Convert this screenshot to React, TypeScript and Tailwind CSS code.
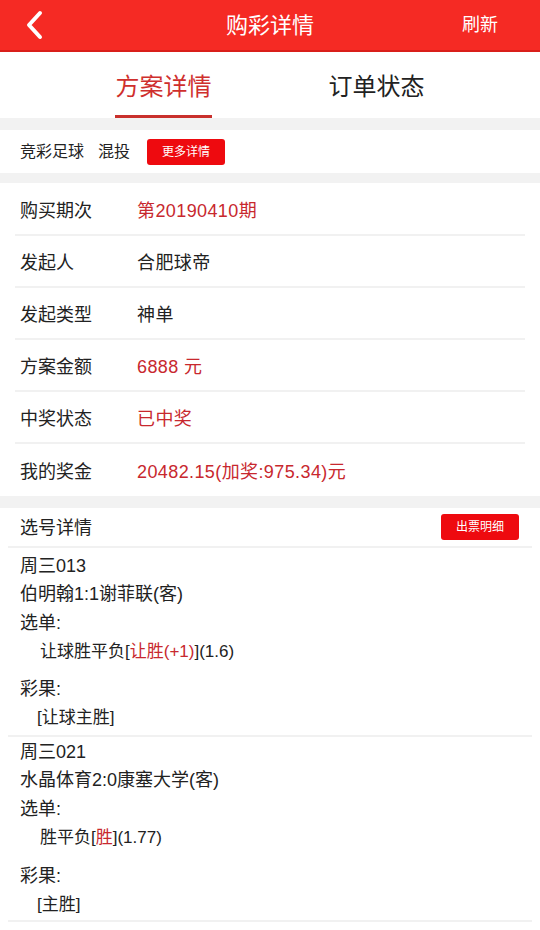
import React from "react";

const font = { fontFamily: '"Liberation Sans", "Noto Sans CJK SC", sans-serif' };

function InfoRow({ label, value, red, last }: { label: string; value: string; red?: boolean; last?: boolean }) {
  return (
    <div className={`mx-[15px] flex h-[52px] items-center pt-[4px] ${last ? "" : "border-b-2 border-[#f1f1f1]"}`}>
      <div className="w-[122px] pl-[5px] text-[18px] text-[#222]">{label}</div>
      <div className={`text-[18px] tracking-[0.4px] ${red ? "text-[#c8282e]" : "text-[#222]"}`}>{value}</div>
    </div>
  );
}

function Line({ children, cls = "" }: { children: React.ReactNode; cls?: string }) {
  return <div className={`flex h-[28.5px] items-center text-[18px] text-[#222] ${cls}`}>{children}</div>;
}

function Sub({ children, cls = "" }: { children: React.ReactNode; cls?: string }) {
  return <div className={`flex h-[28.5px] items-center text-[17px] text-[#222] ${cls}`}>{children}</div>;
}

export default function App() {
  return (
    <div className="w-[540px] min-h-[930px] bg-white" style={font}>
      {/* Header */}
      <div className="flex h-[52px] items-center border-b-2 border-[#d91f1a] bg-[#f52a24] px-[24px]">
        <div className="flex w-[80px] items-center">
          <svg width="22" height="30" viewBox="0 0 22 30">
            <path d="M16 3 L5 15 L16 27" fill="none" stroke="#fff" strokeWidth="4" strokeLinecap="round" strokeLinejoin="round" />
          </svg>
        </div>
        <div className="flex-1 text-center text-[22px] text-white">购彩详情</div>
        <div className="flex w-[80px] justify-end pr-[18px] text-[18px] text-white">刷新</div>
      </div>

      {/* Tabs */}
      <div className="flex h-[66px] px-[57px]">
        <div className="flex flex-1 justify-center">
          <div className="flex flex-col items-center justify-end">
            <div className="pb-[13px] text-[24px] leading-[30px] text-[#cf2f2d]">方案详情</div>
            <div className="h-[3px] w-[97px] bg-[#c9302c]" />
          </div>
        </div>
        <div className="flex flex-1 justify-center">
          <div className="flex flex-col items-center justify-end">
            <div className="pb-[16px] text-[24px] leading-[30px] text-[#222]">订单状态</div>
          </div>
        </div>
      </div>

      <div className="h-[12px] bg-[#f2f2f2]" />

      {/* Type row */}
      <div className="flex h-[43px] items-center px-[20px]">
        <span className="text-[16px] text-[#222]">竞彩足球</span>
        <span className="ml-[14px] text-[16px] text-[#222]">混投</span>
        <div className="ml-[17px] flex h-[26px] w-[78px] items-center justify-center rounded-[3px] bg-[#ee0a0f] text-[12px] text-white">
          更多详情
        </div>
      </div>

      <div className="h-[10px] bg-[#f2f2f2]" />

      {/* Info rows */}
      <div className="pt-[1px]">
        <InfoRow label="购买期次" value="第20190410期" red />
        <InfoRow label="发起人" value="合肥球帝" />
        <InfoRow label="发起类型" value="神单" />
        <InfoRow label="方案金额" value="6888 元" red />
        <InfoRow label="中奖状态" value="已中奖" red />
        <InfoRow label="我的奖金" value="20482.15(加奖:975.34)元" red last />
      </div>

      <div className="h-[12px] bg-[#f2f2f2]" />

      {/* Selection header */}
      <div className="mx-[8px] flex h-[40px] items-center justify-between border-b-2 border-[#f1f1f1] pl-[12px] pr-[13px]">
        <span className="pt-[3px] text-[18px] text-[#222]">选号详情</span>
        <div className="flex h-[26px] w-[78px] items-center justify-center rounded-[3px] bg-[#ee0a0f] text-[12px] text-white">
          出票明细
        </div>
      </div>

      {/* Match 1 */}
      <div className="mx-[8px] border-b-2 border-[#f1f1f1] pb-[3px] pl-[12px] pt-[4px]">
        <Line>周三013</Line>
        <Line>伯明翰1:1谢菲联(客)</Line>
        <Line>选单:</Line>
        <Sub cls="pl-[20px]">
          让球胜平负[<span className="text-[#c8282e]">让胜(+1)</span>](1.6)
        </Sub>
        <Line cls="mt-[9px]">彩果:</Line>
        <Sub cls="pl-[17px]">[让球主胜]</Sub>
      </div>

      {/* Match 2 */}
      <div className="mx-[8px] border-b-2 border-[#f1f1f1] pb-[1px] pl-[12px] pt-[1px]">
        <Line>周三021</Line>
        <Line>水晶体育2:0康塞大学(客)</Line>
        <Line>选单:</Line>
        <Sub cls="pl-[20px]">
          胜平负[<span className="text-[#c8282e]">胜</span>](1.77)
        </Sub>
        <Line cls="mt-[10px]">彩果:</Line>
        <Sub cls="pl-[17px]">[主胜]</Sub>
      </div>
    </div>
  );
}
